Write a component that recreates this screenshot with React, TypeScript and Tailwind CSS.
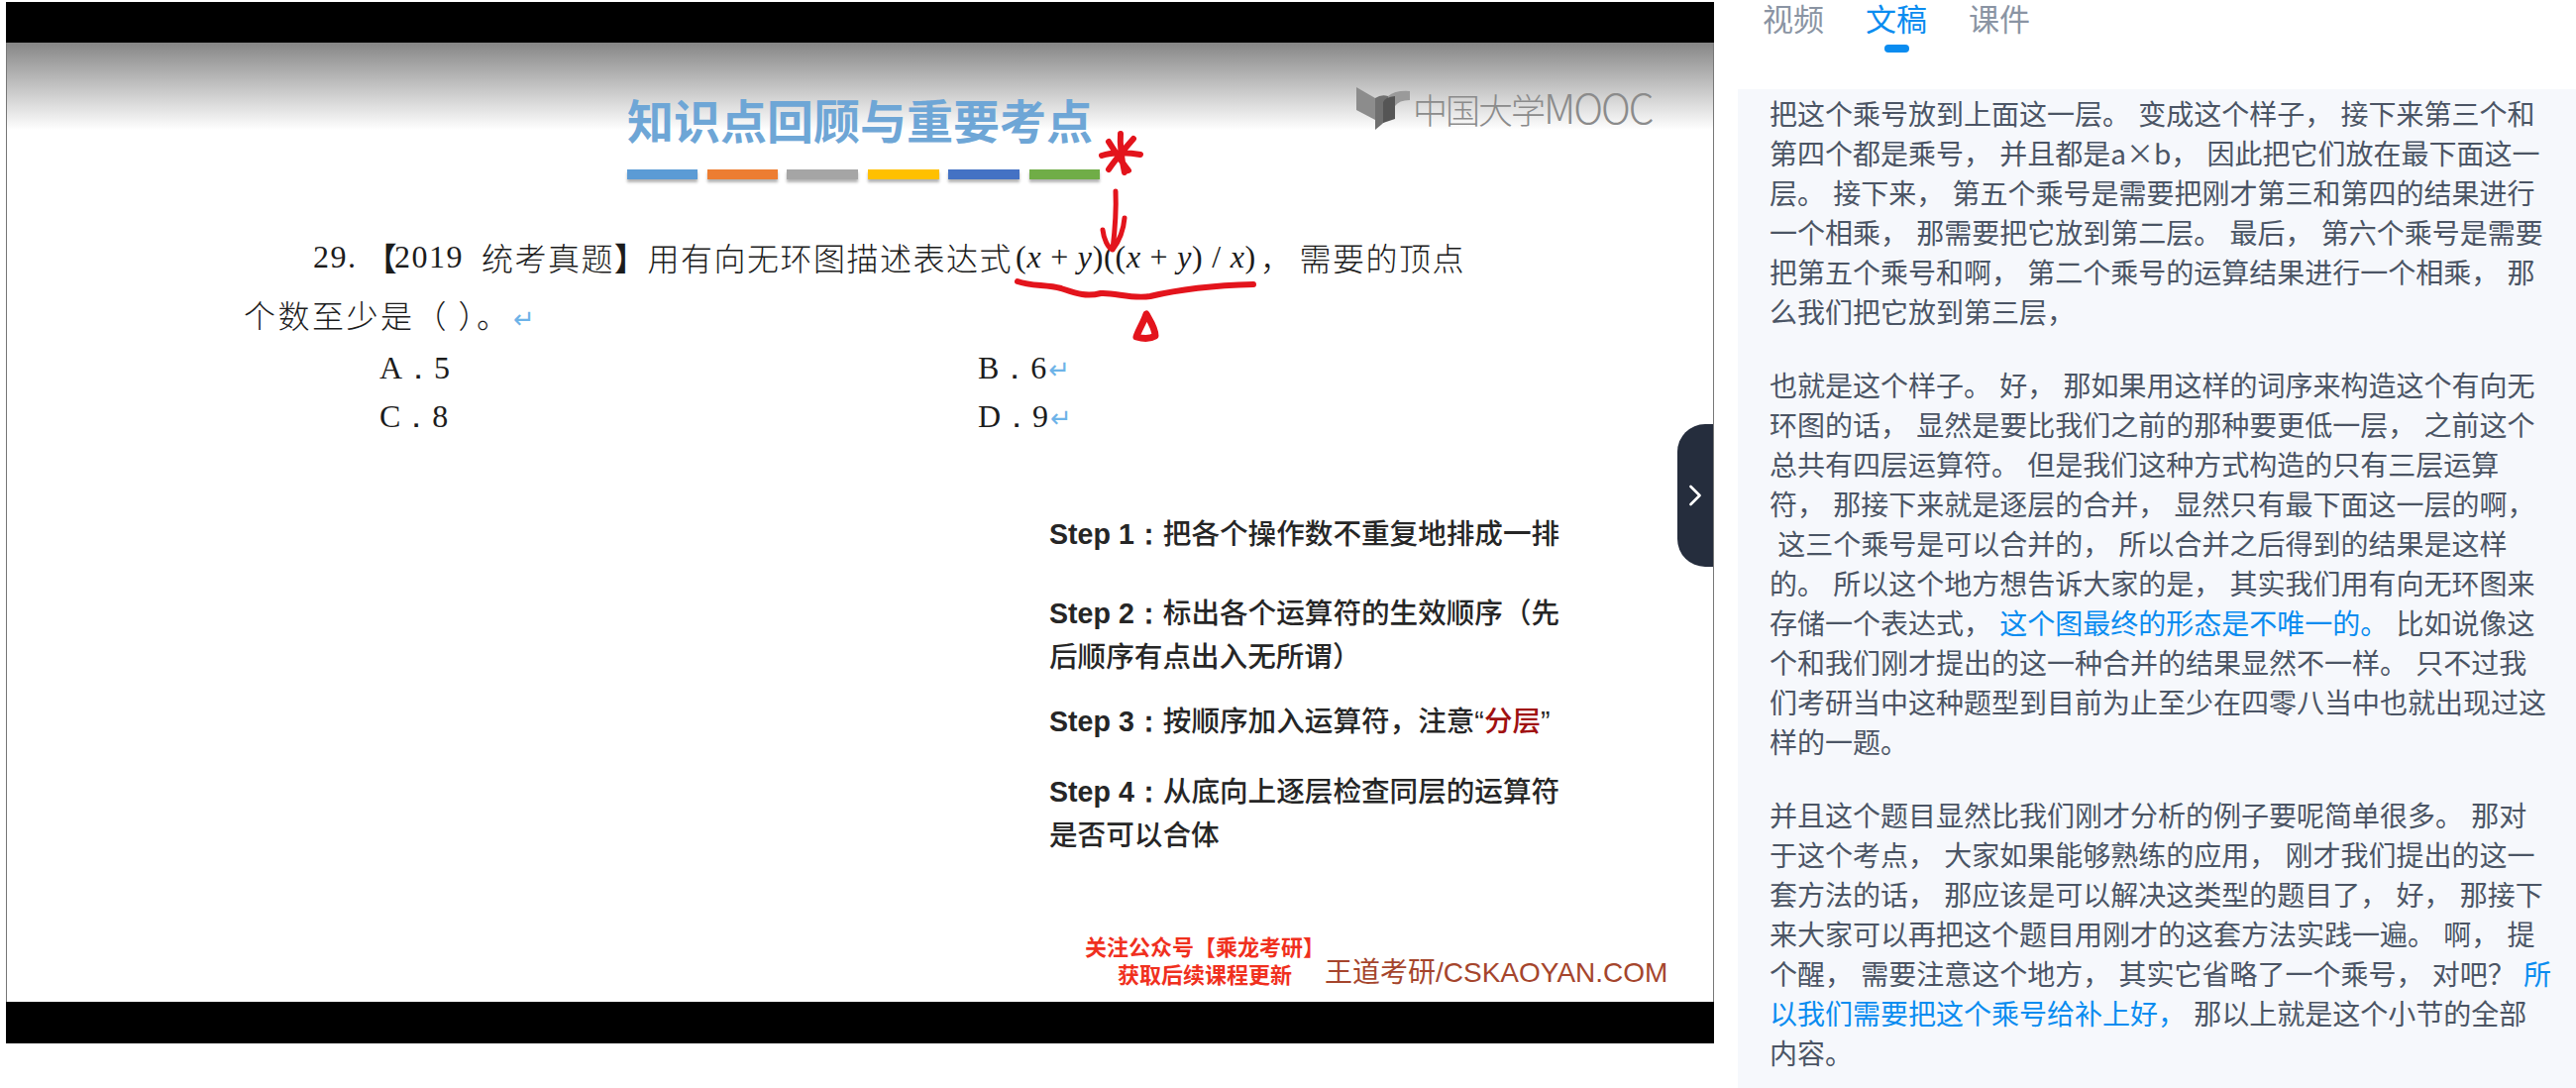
import { ChevronRight } from "lucide-react";

const cjk = "font-['Noto_Sans_CJK_SC',sans-serif]";
const latinBold = "font-['Liberation_Sans',sans-serif] font-bold";
const barColors = [
  "w-[71px] bg-[#5b9bd5]",
  "w-[71px] bg-[#ed7d31]",
  "w-[72px] bg-[#a5a5a5]",
  "w-[72px] bg-[#ffc000]",
  "w-[72px] bg-[#4472c4]",
  "w-[71px] bg-[#70ad47]",
];

const Blue = ({ children }: { children: string }) => <span className="text-[#0a8cf0]">{children}</span>;
const Ret = () => <span className="ml-[2px] text-[#6db3e8] font-['DejaVu_Sans',sans-serif] text-[26px] tracking-normal">↵</span>;

const transcript = [
  [
    "把这个乘号放到上面这一层。 变成这个样子， 接下来第三个和",
    "第四个都是乘号， 并且都是a×b， 因此把它们放在最下面这一",
    "层。 接下来， 第五个乘号是需要把刚才第三和第四的结果进行",
    "一个相乘， 那需要把它放到第二层。 最后， 第六个乘号是需要",
    "把第五个乘号和啊， 第二个乘号的运算结果进行一个相乘， 那",
    "么我们把它放到第三层，",
  ],
  [
    "也就是这个样子。 好， 那如果用这样的词序来构造这个有向无",
    "环图的话， 显然是要比我们之前的那种要更低一层， 之前这个",
    "总共有四层运算符。 但是我们这种方式构造的只有三层运算",
    "符， 那接下来就是逐层的合并， 显然只有最下面这一层的啊，",
    " 这三个乘号是可以合并的， 所以合并之后得到的结果是这样",
    "的。 所以这个地方想告诉大家的是， 其实我们用有向无环图来",
    <>存储一个表达式， <Blue>这个图最终的形态是不唯一的。</Blue> 比如说像这</>,
    "个和我们刚才提出的这一种合并的结果显然不一样。 只不过我",
    "们考研当中这种题型到目前为止至少在四零八当中也就出现过这",
    "样的一题。",
  ],
  [
    "并且这个题目显然比我们刚才分析的例子要呢简单很多。 那对",
    "于这个考点， 大家如果能够熟练的应用， 刚才我们提出的这一",
    "套方法的话， 那应该是可以解决这类型的题目了， 好， 那接下",
    "来大家可以再把这个题目用刚才的这套方法实践一遍。 啊， 提",
    <>个醒， 需要注意这个地方， 其实它省略了一个乘号， 对吧？ <Blue>所</Blue></>,
    <><Blue>以我们需要把这个乘号给补上好，</Blue> 那以上就是这个小节的全部</>,
    "内容。",
  ],
];

function MoocLogo() {
  return (
    <svg width="56" height="46" viewBox="0 0 56 46">
      <path d="M1 1 L20 12 L20 34 L1 24 Z" fill="#8c8c8c" />
      <path d="M20 12 Q26 8 33 10 L33 33 L20 44 Z" fill="#6f6f6f" />
      <path d="M33 10 Q40 4 55 5 L55 14 Q44 14 40 20 L40 32 L33 33 Z" fill="#9a9a9a" />
      <path d="M28 16 Q30 11 40 10 L40 33 L28 37 Z" fill="#555" />
    </svg>
  );
}

function Handwriting() {
  return (
    <svg className="absolute left-0 top-0 pointer-events-none" width="1724" height="340" viewBox="0 43 1724 340">
      <g fill="none" stroke="#e3141c" strokeLinecap="round" strokeLinejoin="round" transform="translate(-6 0)">
        <path d="M1130 135 C1129 148 1131 160 1134 174 M1111 157 C1122 153 1140 154 1150 156 M1118 143 C1124 152 1130 162 1138 172 M1143 140 C1136 148 1124 162 1118 171" strokeWidth="6" />
        <path d="M1125 193 C1126 215 1124 235 1122 252 M1112 232 C1113 241 1117 250 1122 252 C1128 244 1133 232 1134 220" strokeWidth="5" />
        <path d="M1026 284 C1040 289 1055 287 1070 291 C1085 296 1095 300 1110 296 C1125 295 1140 302 1160 299 C1185 293 1225 288 1264 287" strokeWidth="6" />
        <path d="M1156 317 C1153 326 1148 333 1146 340 C1153 342 1160 342 1165 339 C1165 331 1160 324 1156 317 Z" strokeWidth="7" />
      </g>
    </svg>
  );
}

function Slide() {
  return (
    <div className="relative flex h-[968px] flex-col border-x border-[#777] bg-[linear-gradient(to_bottom,#868686,#ffffff_88px)] text-[#1c1c1c]">
      <Handwriting />
      <div className="flex items-start">
        <div className="ml-[626px] w-[477px] pt-[52px]">
          <h1 className={`${cjk} whitespace-nowrap text-[47px] leading-[50px] font-bold text-[#6ea6d6]`}>知识点回顾与重要考点</h1>
          <div className="mt-[26px] flex justify-between">
            {barColors.map((c) => (
              <div key={c} className={`h-[10px] shadow-[0_3px_3px_rgba(0,0,0,0.3)] ${c}`} />
            ))}
          </div>
        </div>
        <div className="ml-[258px] mt-[44px] flex items-start gap-[2px]">
          <MoocLogo />
          <span className={`${cjk} whitespace-nowrap text-[35px] leading-[40px] font-light tracking-[-2px] text-[#8b8b8b]`}>
            中国大学<span className="text-[41px]">MOOC</span>
          </span>
        </div>
      </div>

      <div className={`${cjk} mt-[58px] ml-[309px] flex whitespace-nowrap text-[32px] leading-[40px] font-light tracking-[1.5px]`}>
        <span className="font-['Liberation_Serif',serif]">29.</span>
        <span className="ml-[8px] font-bold">【</span>
        <span className="-ml-[4px] font-['Liberation_Serif',serif]">2019</span>
        <span className="ml-[18px]">统考真题</span>
        <span className="font-bold">】</span>
        <span>用有向无环图描述表达式</span>
        <span className="ml-[3px] font-['Liberation_Serif',serif] tracking-[0.75px]">
          (<i>x</i> + <i>y</i>)((<i>x</i> + <i>y</i>) / <i>x</i>)
        </span>
        <span className="ml-[4px]">，</span>
        <span className="ml-[6px]">需要的顶点</span>
      </div>
      <div className={`${cjk} mt-[18px] ml-[239px] text-[32px] leading-[40px] font-light tracking-[2.5px]`}>
        个数至少是（ ）。<Ret />
      </div>

      <div className="mt-[9px] ml-[376px] grid w-[800px] grid-cols-[604px_1fr] gap-y-[7px] font-['Liberation_Serif',serif] text-[32px] leading-[40px]">
        <div>A．5</div>
        <div>B．6<Ret /></div>
        <div>C．8</div>
        <div>D．9<Ret /></div>
      </div>

      <div className={`${cjk} mt-[74px] ml-[1052px] flex w-[530px] flex-col text-[28.6px] leading-[42px] font-medium text-[#262626]`}>
        <p className="whitespace-nowrap"><b className={latinBold}>Step 1：</b>把各个操作数不重复地排成一排</p>
        <p className="mt-[36px] whitespace-nowrap"><b className={latinBold}>Step 2：</b>标出各个运算符的生效顺序（先<br />后顺序有点出入无所谓）</p>
        <p className="mt-[23px] whitespace-nowrap">
          <b className={latinBold}>Step 3：</b>按顺序加入运算符，注意<span className="font-['Liberation_Sans',sans-serif]">“</span><span className="text-[#a01010]">分层</span><span className="font-['Liberation_Sans',sans-serif]">”</span>
        </p>
        <p className="mt-[27px] whitespace-nowrap"><b className={latinBold}>Step 4：</b>从底向上逐层检查同层的运算符<br />是否可以合体</p>
      </div>

      <div className="mt-[78px] flex items-end">
        <div className={`${cjk} ml-[1088px] text-[22px] leading-[28px] font-bold whitespace-nowrap text-[#f0301e]`}>
          <div>关注公众号【乘龙考研】</div>
          <div className="ml-[33px]">获取后续课程更新</div>
        </div>
        <div className="-mb-[3px] whitespace-nowrap font-['Liberation_Sans','Noto_Sans_CJK_SC',sans-serif] text-[28px] leading-[34px] text-[#a5452c]">王道考研/CSKAOYAN.COM</div>
      </div>

      <button className="absolute right-0 top-[385px] flex h-[144px] w-[36px] items-center justify-center rounded-l-[28px] bg-[#252d3d] text-white">
        <ChevronRight size={48} strokeWidth={1.75} />
      </button>
    </div>
  );
}

export default function App() {
  return (
    <div className="flex h-[1098px] w-[2600px] overflow-hidden bg-white">
      <div className="ml-[6px] mt-[2px] w-[1724px] shrink-0">
        <div className="h-[41px] bg-black" />
        <Slide />
        <div className="h-[42px] bg-black" />
      </div>

      <div className="flex min-w-0 flex-1 flex-col">
        <div className={`${cjk} relative ml-[49px] flex h-[90px] shrink-0 gap-[42px] text-[31px] leading-[35px] text-[#8a94a3]`}>
          <span>视频</span>
          <span className="relative text-[#0a8cf0]">
            文稿
            <span className="absolute left-[19px] top-[45px] h-[8px] w-[25px] rounded-full bg-[#0a8cf0]" />
          </span>
          <span>课件</span>
        </div>
        <div className={`${cjk} ml-[24px] flex-1 bg-[#f6f8fc] pl-[32px] pt-[4px] text-[28px] leading-[40px] [word-spacing:2px] text-[#4b5565]`}>
          {transcript.map((para, i) => (
            <div key={i} className="mb-[34px]">
              {para.map((line, j) => (
                <div key={j} className="whitespace-pre">{line}</div>
              ))}
            </div>
          ))}
        </div>
      </div>
    </div>
  );
}
